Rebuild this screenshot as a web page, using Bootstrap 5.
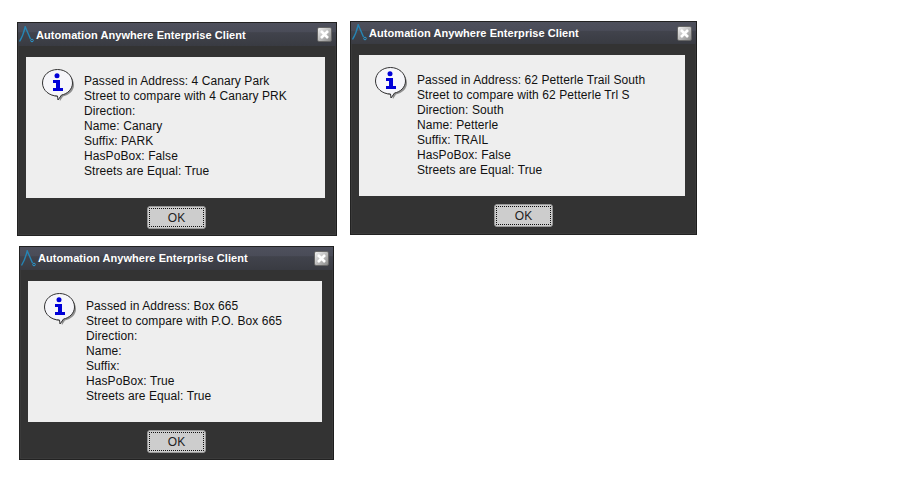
<!DOCTYPE html>
<html lang="en">
<head>
<meta charset="utf-8">
<title>Automation Anywhere Enterprise Client</title>
<link rel="stylesheet" href="https://cdn.jsdelivr.net/npm/bootstrap@5.3.0/dist/css/bootstrap.min.css">
<style>
body { background: #fff; width: 906px; height: 489px; overflow: hidden; font-family: "Liberation Sans", Arial, sans-serif; position: relative; }
.aa-win { position: absolute; height: 214px; background: #333; border: 1px solid #222; border-right-color: #1c1c1c; box-shadow: inset 0 0 0 1px #3a3a3a; }
.aa-w1 { left: 17px; top: 22px; width: 320px; }
.aa-w2 { left: 350px; top: 21px; width: 347px; }
.aa-w3 { left: 19px; top: 246px; width: 315px; }
.aa-title { height: 23px; padding: 0 4px 0 1px; gap: 2px; background: linear-gradient(#4e505c 0, #4a4c58 38%, #41434c 42%, #393b42 100%); }
.aa-w2 .aa-title { height: 22px; }
.aa-title-text { color: #fff; font-size: 11px; font-weight: 700; line-height: 1; letter-spacing: .065px; }
.aa-w1 .aa-title-text { padding-top: 1px; }
.aa-close { width: 15px; height: 15px; border-radius: 2px; background: linear-gradient(135deg, #f0f0f0, #8a8a8a); border: 1px solid #666; }
.aa-body { padding: 11px 11px 0 8px; }
.aa-panel { background: #eee; height: 141px; padding: 12px 15px 0 16px; gap: 6px; color: #111; font-size: 12px; line-height: 15px; letter-spacing: .08px; }
.aa-lines { padding-top: 5px; }
.aa-w2 .aa-lines, .aa-w3 .aa-lines { padding-top: 6px; }
.aa-foot { padding-top: 8px; }
.aa-w1 .aa-foot { padding-right: 1px; }
.aa-ok { width: 59px; height: 23px; padding: 0; background: #cdcdcd; color: #222; font-size: 12px; line-height: 1; border: 1px solid #999; border-radius: 3px; outline: 1px dotted #111; outline-offset: -3px; font-family: "Liberation Sans", Arial, sans-serif; }
</style>
</head>
<body>

<section class="aa-win aa-w1 d-flex flex-column">
  <div class="aa-title d-flex align-items-center">
    <svg width="15" height="18" viewBox="0 0 15 18" class="flex-shrink-0"><path d="M.5 15.5C3 11.5 5 6 6.200 .8L11.500 13" fill="none" stroke="#2585b5" stroke-width="1.4"/><circle cx="13" cy="14.500" r="1.300" fill="none" stroke="#2a9ad0"/></svg>
    <span class="aa-title-text flex-grow-1">Automation Anywhere Enterprise Client</span>
    <span class="aa-close d-flex align-items-center justify-content-center"><svg width="11" height="11" viewBox="0 0 11 11"><path d="M2 2 9 9M9 2 2 9" stroke="#fff" stroke-width="2.6"/></svg></span>
  </div>
  <div class="aa-body">
    <div class="aa-panel d-flex">
      <svg width="36" height="36" viewBox="0 0 36 36" class="flex-shrink-0"><path d="M17 3C25 3 32 8 32 16C32 22 27 26 21 27.500L18 32L17 28C9 28 3 23 3 16C3 8 9 3 17 3Z" fill="#8f8f8f"/><path d="M15.500 .5C23.500 .5 30.500 6 30.500 14C30.500 20 25.500 25 19.500 26L16 31L15.500 27C7.500 27 .5 21.500 .5 14C.5 6 7.500 .5 15.500 .5Z" fill="#f6f6fa" stroke="#333"/><circle cx="15" cy="6.800" r="2.500" fill="#0000d8"/><path d="M11 11H18V19H21V22H11V19H14V14H11Z" fill="#0000d8"/></svg>
      <div class="aa-lines">Passed in Address: 4 Canary Park<br>Street to compare with 4 Canary PRK<br>Direction:<br>Name: Canary<br>Suffix: PARK<br>HasPoBox: False<br>Streets are Equal: True</div>
    </div>
  </div>
  <div class="aa-foot d-flex justify-content-center"><button type="button" class="btn aa-ok">OK</button></div>
</section>

<section class="aa-win aa-w2 d-flex flex-column">
  <div class="aa-title d-flex align-items-center">
    <svg width="15" height="18" viewBox="0 0 15 18" class="flex-shrink-0"><path d="M.5 15.5C3 11.5 5 6 6.200 .8L11.500 13" fill="none" stroke="#2585b5" stroke-width="1.4"/><circle cx="13" cy="14.500" r="1.300" fill="none" stroke="#2a9ad0"/></svg>
    <span class="aa-title-text flex-grow-1">Automation Anywhere Enterprise Client</span>
    <span class="aa-close d-flex align-items-center justify-content-center"><svg width="11" height="11" viewBox="0 0 11 11"><path d="M2 2 9 9M9 2 2 9" stroke="#fff" stroke-width="2.6"/></svg></span>
  </div>
  <div class="aa-body">
    <div class="aa-panel d-flex">
      <svg width="36" height="36" viewBox="0 0 36 36" class="flex-shrink-0"><path d="M17 3C25 3 32 8 32 16C32 22 27 26 21 27.500L18 32L17 28C9 28 3 23 3 16C3 8 9 3 17 3Z" fill="#8f8f8f"/><path d="M15.500 .5C23.500 .5 30.500 6 30.500 14C30.500 20 25.500 25 19.500 26L16 31L15.500 27C7.500 27 .5 21.500 .5 14C.5 6 7.500 .5 15.500 .5Z" fill="#f6f6fa" stroke="#333"/><circle cx="15" cy="6.800" r="2.500" fill="#0000d8"/><path d="M11 11H18V19H21V22H11V19H14V14H11Z" fill="#0000d8"/></svg>
      <div class="aa-lines">Passed in Address: 62 Petterle Trail South<br>Street to compare with 62 Petterle Trl S<br>Direction: South<br>Name: Petterle<br>Suffix: TRAIL<br>HasPoBox: False<br>Streets are Equal: True</div>
    </div>
  </div>
  <div class="aa-foot d-flex justify-content-center"><button type="button" class="btn aa-ok">OK</button></div>
</section>

<section class="aa-win aa-w3 d-flex flex-column">
  <div class="aa-title d-flex align-items-center">
    <svg width="15" height="18" viewBox="0 0 15 18" class="flex-shrink-0"><path d="M.5 15.5C3 11.5 5 6 6.200 .8L11.500 13" fill="none" stroke="#2585b5" stroke-width="1.4"/><circle cx="13" cy="14.500" r="1.300" fill="none" stroke="#2a9ad0"/></svg>
    <span class="aa-title-text flex-grow-1">Automation Anywhere Enterprise Client</span>
    <span class="aa-close d-flex align-items-center justify-content-center"><svg width="11" height="11" viewBox="0 0 11 11"><path d="M2 2 9 9M9 2 2 9" stroke="#fff" stroke-width="2.6"/></svg></span>
  </div>
  <div class="aa-body">
    <div class="aa-panel d-flex">
      <svg width="36" height="36" viewBox="0 0 36 36" class="flex-shrink-0"><path d="M17 3C25 3 32 8 32 16C32 22 27 26 21 27.500L18 32L17 28C9 28 3 23 3 16C3 8 9 3 17 3Z" fill="#8f8f8f"/><path d="M15.500 .5C23.500 .5 30.500 6 30.500 14C30.500 20 25.500 25 19.500 26L16 31L15.500 27C7.500 27 .5 21.500 .5 14C.5 6 7.500 .5 15.500 .5Z" fill="#f6f6fa" stroke="#333"/><circle cx="15" cy="6.800" r="2.500" fill="#0000d8"/><path d="M11 11H18V19H21V22H11V19H14V14H11Z" fill="#0000d8"/></svg>
      <div class="aa-lines">Passed in Address: Box 665<br>Street to compare with P.O. Box 665<br>Direction:<br>Name:<br>Suffix:<br>HasPoBox: True<br>Streets are Equal: True</div>
    </div>
  </div>
  <div class="aa-foot d-flex justify-content-center"><button type="button" class="btn aa-ok">OK</button></div>
</section>

<script src="https://cdn.jsdelivr.net/npm/bootstrap@5.3.0/dist/js/bootstrap.bundle.min.js"></script>
</body>
</html>
